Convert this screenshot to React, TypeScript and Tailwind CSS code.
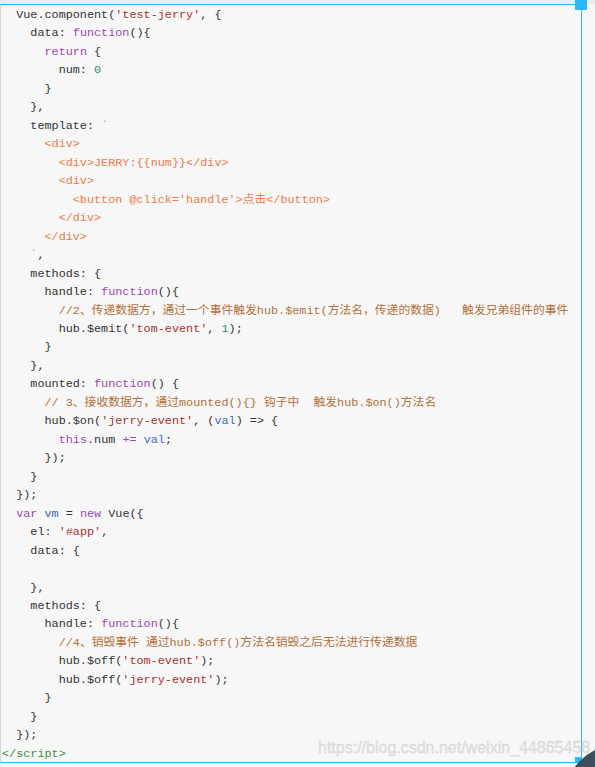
import React from "react";

type Seg = [string, string?];

const P = "text-[#333333]";
const S = "text-[#a8322d]";
const K = "text-[#9a47b8]";
const N = "text-[#2f8a6a]";
const T = "text-[#f07a48]";
const C = "text-[#b4703a]";
const V = "text-[#3b68cc]";
const G = "text-[#3f8f3f]";

const lines: Seg[][] = [
  [["  Vue.component("], ["'test-jerry'", S], [", {"]],
  [["    data: "], ["function", K], ["(){"]],
  [["      "], ["return", K], [" {"]],
  [["        num: "], ["0", N]],
  [["      }"]],
  [["    },"]],
  [["    template: "], ["`", T]],
  [["      <div>", T]],
  [["        <div>JERRY:{{num}}</div>", T]],
  [["        <div>", T]],
  [["          <button @click='handle'>点击</button>", T]],
  [["        </div>", T]],
  [["      </div>", T]],
  [["    "], ["`", T], [","]],
  [["    methods: {"]],
  [["      handle: "], ["function", K], ["(){"]],
  [["        "], ["//2、传递数据方，通过一个事件触发hub.$emit(方法名，传递的数据)   触发兄弟组件的事件", C]],
  [["        hub.$emit("], ["'tom-event'", S], [", "], ["1", N], [");"]],
  [["      }"]],
  [["    },"]],
  [["    mounted: "], ["function", K], ["() {"]],
  [["      "], ["// 3、接收数据方，通过mounted(){} 钩子中  触发hub.$on()方法名", C]],
  [["      hub.$on("], ["'jerry-event'", S], [", ("], ["val", V], [") => {"]],
  [["        "], ["this", K], [".num "], ["+=", K], [" "], ["val", V], [";"]],
  [["      });"]],
  [["    }"]],
  [["  });"]],
  [["  "], ["var", K], [" "], ["vm", V], [" = "], ["new", K], [" Vue({"]],
  [["    el: "], ["'#app'", S], [","]],
  [["    data: {"]],
  [[""]],
  [["    },"]],
  [["    methods: {"]],
  [["      handle: "], ["function", K], ["(){"]],
  [["        "], ["//4、销毁事件 通过hub.$off()方法名销毁之后无法进行传递数据", C]],
  [["        hub.$off("], ["'tom-event'", S], [");"]],
  [["        hub.$off("], ["'jerry-event'", S], [");"]],
  [["      }"]],
  [["    }"]],
  [["  });"]],
  [["</script>", G]],
];

export default function App() {
  return (
    <div className="relative w-[595px] h-[767px] overflow-hidden bg-[#f6f6f6]">
      <div className="h-[4px] bg-[#ececec]" />
      <div className="flex">
        <div className="w-[582px] h-[759px] border-l border-l-[#d4d4d4] border-t-[1.5px] border-r-[1.5px] border-b-[1.5px] border-[#33b6fb] bg-[#f7f7f7]">
          <div
            className="pt-[1px] pl-[1px] text-[11.8px] leading-[18.475px] whitespace-pre"
            style={{ fontFamily: '"Liberation Mono", "Noto Sans CJK SC", monospace' }}
          >
            {lines.map((segs, i) => (
              <div key={i} className="h-[18.475px]">
                {segs.map(([t, c], j) => (
                  <span key={j} className={c ?? P}>
                    {t}
                  </span>
                ))}
              </div>
            ))}
          </div>
        </div>
      </div>
      {/* top-right handle */}
      <div className="absolute left-[575px] top-0 w-[12px] h-[10px] bg-[#2db7fb]" />
      <div className="absolute left-[575px] top-[757px] w-[7px] h-[6px] bg-[#2db7fb]" />
      {/* watermark */}
      <div
        className="absolute left-[318px] top-[738px] text-[16px] leading-[20px] text-[#e2e2e2] whitespace-nowrap"
        style={{ fontFamily: '"Liberation Sans", Arial, sans-serif', WebkitTextStroke: "0.3px #cfcfcf" }}
      >
        https://blog.csdn.net/weixin_44865458
      </div>
      {/* corner circle */}
      <div className="absolute left-[564px] top-[744px] w-[112px] h-[112px] rounded-full bg-[#3c4d5c]" />
    </div>
  );
}
